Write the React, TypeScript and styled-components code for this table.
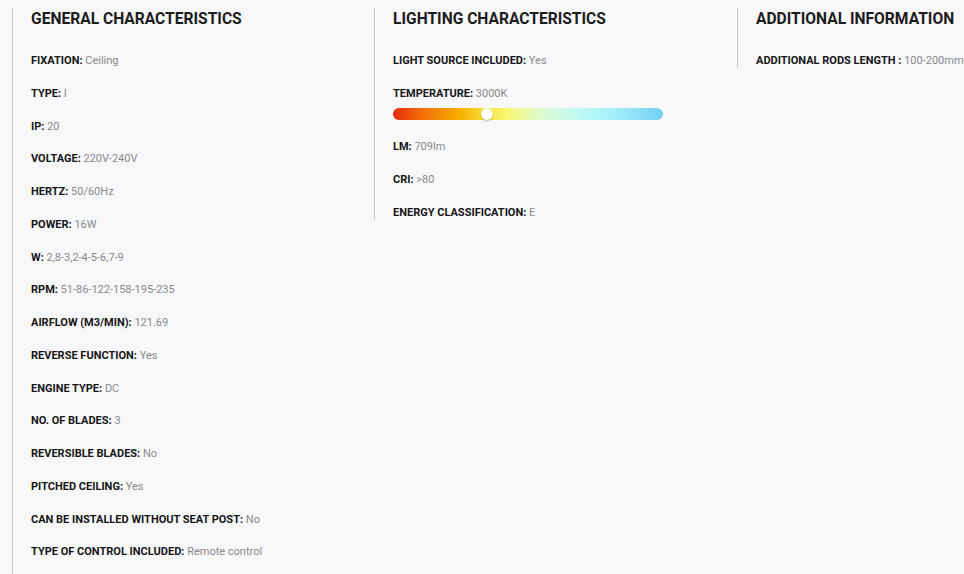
import React from "react";
import styled, { createGlobalStyle } from "styled-components";

const Global = createGlobalStyle`
  html, body { margin: 0; padding: 0; background: #f8f8fa; overflow: hidden; }
  body { font-family: Roboto, "Liberation Sans", Arial, sans-serif; }
`;

const Page = styled.div`
  display: grid;
  grid-template-columns: 362px 363px 362px;
  align-items: start;
  padding: 8px 0 0 12px;
  width: 1100px;
`;

const Column = styled.section<{ $tail?: number }>`
  border-left: 1px solid #c8c8cc;
  padding: 0 0 ${(p) => p.$tail ?? 0}px 18px;
`;

const Heading = styled.h2`
  margin: 0;
  font-size: 15.6px;
  line-height: 20px;
  font-weight: 700;
  color: #1c1c1c;
  padding: 1px 0 25px;
`;

const List = styled.div`
  display: flex;
  flex-direction: column;
  gap: 18.75px;
`;

const Row = styled.div`
  font-size: 11px;
  line-height: 14px;
  white-space: nowrap;
  color: #898989;
`;

const Label = styled.span`
  font-weight: 700;
  color: #151515;
`;

const Slider = styled.div`
  position: relative;
  width: 270px;
  height: 12px;
  border-radius: 6px;
  margin: -11.4px 0 1.3px;
  background: linear-gradient(
    to right,
    #e62a0a 0%,
    #f36a08 10%,
    #f8b000 25%,
    #f8e040 34%,
    #f6f870 42%,
    #dcfacf 55%,
    #c0faf2 68%,
    #a4f0fa 82%,
    #72cef2 100%
  );
`;

const Thumb = styled.div`
  position: absolute;
  top: 0;
  width: 12px;
  height: 12px;
  margin-left: -6px;
  border-radius: 50%;
  background: #fff;
  box-shadow: 0 1px 2px rgba(0, 0, 0, 0.25);
`;

type Item = [string, string];

const general: Item[] = [
  ["FIXATION:", "Ceiling"],
  ["TYPE:", "I"],
  ["IP:", "20"],
  ["VOLTAGE:", "220V-240V"],
  ["HERTZ:", "50/60Hz"],
  ["POWER:", "16W"],
  ["W:", "2,8-3,2-4-5-6,7-9"],
  ["RPM:", "51-86-122-158-195-235"],
  ["AIRFLOW (M3/MIN):", "121.69"],
  ["REVERSE FUNCTION:", "Yes"],
  ["ENGINE TYPE:", "DC"],
  ["NO. OF BLADES:", "3"],
  ["REVERSIBLE BLADES:", "No"],
  ["PITCHED CEILING:", "Yes"],
  ["CAN BE INSTALLED WITHOUT SEAT POST:", "No"],
  ["TYPE OF CONTROL INCLUDED:", "Remote control"],
];

const Spec = ({ item }: { item: Item }) => (
  <Row>
    <Label>{item[0]}</Label> {item[1]}
  </Row>
);

export default function App() {
  return (
    <>
      <Global />
      <Page>
        <Column $tail={30}>
          <Heading>GENERAL CHARACTERISTICS</Heading>
          <List>
            {general.map((it) => (
              <Spec key={it[0]} item={it} />
            ))}
          </List>
        </Column>
        <Column>
          <Heading>LIGHTING CHARACTERISTICS</Heading>
          <List>
            <Spec item={["LIGHT SOURCE INCLUDED:", "Yes"]} />
            <Spec item={["TEMPERATURE:", "3000K"]} />
            <Slider>
              <Thumb style={{ left: `${(94 / 270) * 100}%` }} />
            </Slider>
            <Spec item={["LM:", "709lm"]} />
            <Spec item={["CRI:", ">80"]} />
            <Spec item={["ENERGY CLASSIFICATION:", "E"]} />
          </List>
        </Column>
        <Column>
          <Heading>ADDITIONAL INFORMATION</Heading>
          <List>
            <Spec item={["ADDITIONAL RODS LENGTH :", "100-200mm"]} />
          </List>
        </Column>
      </Page>
    </>
  );
}
